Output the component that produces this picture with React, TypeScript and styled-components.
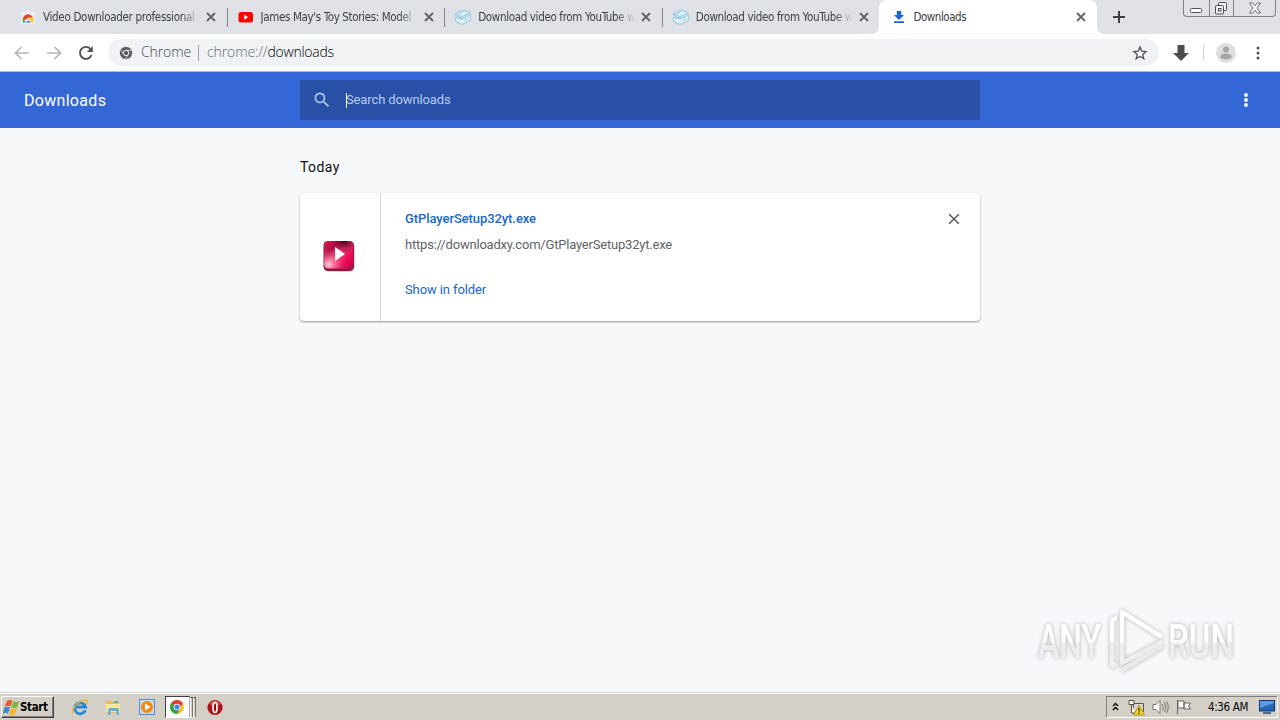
import React from "react";
import styled, { createGlobalStyle } from "styled-components";

const Global = createGlobalStyle`
  * { box-sizing: border-box; }
  body { margin: 0; overflow: hidden; background: #f6f9fc; }
  svg { display: block; flex: none; }
`;

const Screen = styled.div`
  position: relative;
  display: flex;
  flex-direction: column;
  width: 1280px;
  height: 720px;
  overflow: hidden;
  font-family: Roboto, "Liberation Sans", sans-serif;
`;

const TabStrip = styled.div`
  display: flex;
  height: 34px;
  padding-left: 9px;
  background: #dee1e6;
`;

const Tab = styled.div<{ $active?: boolean; $divider?: boolean }>`
  position: relative;
  display: flex;
  align-items: center;
  width: 217.6px;
  height: 34px;
  padding-left: 11px;
  background: ${(p) => (p.$active ? "#fff" : "transparent")};
  border-radius: ${(p) => (p.$active ? "8px 8px 0 0" : "0")};
  &::after {
    content: "";
    display: ${(p) => (p.$divider ? "block" : "none")};
    position: absolute;
    right: -1px;
    top: 8px;
    width: 1px;
    height: 19px;
    background: #80848a;
  }
`;

const TabTitle = styled.div<{ $spacing?: number; $fade?: boolean }>`
  width: 158px;
  margin-left: 7px;
  white-space: nowrap;
  font: 11.5px/18px "DejaVu Sans Condensed", "DejaVu Sans", sans-serif;
  letter-spacing: ${(p) => p.$spacing ?? 0}px;
  color: #3c4043;
  mask-image: ${(p) => (p.$fade ? "linear-gradient(90deg, #000 138px, transparent 157px)" : "none")};
`;

const TabClose = styled.div`
  margin-left: 5px;
`;

const TabFoot = styled.svg<{ $side: "left" | "right" }>`
  position: absolute;
  bottom: 0;
  ${(p) => p.$side}: -8px;
`;

const NewTab = styled.div`
  display: flex;
  align-items: center;
  padding-left: 16px;
`;

const WindowButtons = styled.div`
  display: flex;
  width: 93px;
  height: 17px;
  margin-left: auto;
  margin-right: 4px;
  border: 1px solid #7f8387;
  border-top: 0;
  border-radius: 0 0 4px 4px;
`;

const WindowButton = styled.div<{ $w: number }>`
  display: flex;
  align-items: center;
  justify-content: center;
  width: ${(p) => p.$w}px;
  & + & { border-left: 1px solid #7f8387; }
`;

const Toolbar = styled.div`
  display: flex;
  align-items: center;
  height: 38px;
  padding-left: 13px;
  background: #fff;
  border-bottom: 1px solid #a4bfd9;
`;

const NavIcons = styled.div`
  display: flex;
  gap: 14px;
  width: 95px;
`;

const AddressBar = styled.div`
  display: flex;
  align-items: center;
  width: 1051px;
  height: 27px;
  padding: 0 10px 0 11px;
  border-radius: 14px;
  background: #f0f3f6;
`;

const AddressText = styled.span<{ $color: string; $spacing: number }>`
  padding-bottom: 2px;
  font: 300 14px/20px "Open Sans", "Noto Sans", sans-serif;
  letter-spacing: ${(p) => p.$spacing}px;
  color: ${(p) => p.$color};
`;

const Rule = styled.div<{ $h: number; $m: string; $color: string }>`
  width: 1px;
  height: ${(p) => p.$h}px;
  margin: ${(p) => p.$m};
  background: ${(p) => p.$color};
`;

const StarSlot = styled.div`
  margin-left: auto;
`;

const ToolbarActions = styled.div`
  display: flex;
  align-items: center;
  margin-left: 13px;
`;

const PageHeader = styled.header`
  display: flex;
  align-items: center;
  height: 56px;
  padding: 0 24px;
  background: #3367d6;
`;

const PageTitle = styled.h1`
  width: 276px;
  margin: 0;
  font-size: 16px;
  font-weight: 400;
  letter-spacing: 0.3px;
  line-height: 22px;
  padding-top: 2px;
  color: #fff;
`;

const SearchBox = styled.div`
  display: flex;
  align-items: center;
  width: 680px;
  height: 40px;
  padding-left: 12px;
  background: #2850a7;
`;

const Caret = styled.div`
  width: 1px;
  height: 15px;
  margin-left: 14px;
  background: #fff;
`;

const Placeholder = styled.span`
  margin-left: -1px;
  font-size: 13px;
  line-height: 18px;
  letter-spacing: -0.12px;
  color: #b9cbee;
`;

const MenuSlot = styled.div`
  width: 20px;
  margin-left: auto;
`;

const Content = styled.main`
  flex: 1;
  padding: 28px 0 0 300px;
  background: #f6f9fc;
`;

const DayHeading = styled.h2`
  margin: 0 0 15px;
  font-size: 14px;
  font-weight: 400;
  line-height: 22px;
  letter-spacing: 0.4px;
  color: #111;
`;

const Card = styled.section`
  display: flex;
  width: 680px;
  height: 128px;
  border-radius: 4px;
  background: #fff;
  box-shadow: 0 1px 2px rgba(60, 64, 67, 0.4), 0 1px 2px rgba(60, 64, 67, 0.16);
`;

const FileIconPane = styled.div`
  display: flex;
  align-items: center;
  justify-content: center;
  width: 81px;
  padding: 0 2px 2px 0;
  border-right: 1px solid #d6d9dc;
`;

const FileDetails = styled.div`
  display: flex;
  flex-direction: column;
  flex: 1;
  padding: 16px 0 0 24px;
`;

const FileName = styled.div`
  font-size: 13px;
  font-weight: 500;
  line-height: 20px;
  letter-spacing: -0.08px;
  color: #1967c8;
`;

const FileUrl = styled.div`
  margin-top: 6px;
  font-size: 13px;
  line-height: 20px;
  letter-spacing: -0.2px;
  color: #5f6368;
`;

const ShowLink = styled.div`
  margin-top: 25px;
  font-size: 13px;
  line-height: 20px;
  letter-spacing: -0.1px;
  color: #1967c8;
`;

const RemoveSlot = styled.div`
  padding: 20px 20px 0 0;
`;

const Watermark = styled.svg`
  position: absolute;
  left: 1029px;
  top: 604px;
  filter: drop-shadow(0 0 2px rgba(70, 75, 80, 0.4));
`;

const Taskbar = styled.footer`
  display: flex;
  align-items: center;
  height: 28px;
  padding: 2px 2px 0 1px;
  background: #d4d0c8;
  box-shadow: inset 0 1px #d4d0c8, inset 0 2px #fff;
`;

const StartButton = styled.div`
  display: flex;
  align-items: center;
  width: 53px;
  height: 22px;
  padding-left: 1px;
  border: 1px solid;
  border-color: #fff #404040 #404040 #fff;
  box-shadow: inset -1px -1px #808080;
  font: bold 11.5px/18px "DejaVu Sans Condensed", "DejaVu Sans", sans-serif;
  letter-spacing: -0.35px;
  color: #000;
`;

const QuickLaunch = styled.div`
  display: flex;
  align-items: center;
  gap: 16px;
  margin-left: 17px;
`;

const RunningApp = styled.div`
  display: flex;
  align-items: center;
  width: 25px;
  height: 22px;
  margin-left: 10px;
  padding-left: 3px;
  background: #fff;
  border: 1px solid;
  border-color: #404040 #b0aca4 #fff #404040;
`;

const StackEdge = styled.div`
  width: 3px;
  height: 21px;
  border: 1px solid;
  border-color: #404040 #77736c #fff #f4f2ee;
`;

const OperaSlot = styled.div`
  margin-left: 11px;
`;

const Tray = styled.div`
  display: flex;
  align-items: center;
  width: 172px;
  height: 22px;
  margin-left: auto;
  padding-left: 5px;
  border: 1px solid;
  border-color: #808080 #fff #fff #808080;
`;

const Clock = styled.span`
  margin-left: 16px;
  width: 51px;
  white-space: nowrap;
  font: 11.5px/16px "DejaVu Sans Condensed", "DejaVu Sans", sans-serif;
  letter-spacing: -0.35px;
  color: #000;
`;

const Cross = ({ size = 10, color = "#5f6368", weight = 1.8 }) => (
  <svg width={size} height={size} viewBox="0 0 10 10" stroke={color} strokeWidth={weight}>
    <path d="M1 1l8 8M9 1l-8 8" />
  </svg>
);

const WebStoreIcon = () => (
  <svg width="16" height="16" viewBox="0 0 16 16">
    <path d="M1 3h14v11q0 1-1 1H2q-1 0-1-1z" fill="#eceef0" />
    <path d="M5 3q3-3 6 0" fill="none" stroke="#f7f8f9" />
    <path d="M3 12a5.2 5.2 0 0 1 10-3H8z" fill="#e2442f" />
    <path d="M3 9l3 5H3.5q-1.500-2-.5-5z" fill="#4aa65a" />
    <path d="M8 8.500h5.200q.8 2 0 5.500H10z" fill="#f6c844" />
    <path d="M5 14a3.200 3.200 0 0 1 6.300 0z" fill="#4a7fe0" stroke="#fff" strokeWidth=".7" />
  </svg>
);

const YouTubeIcon = () => (
  <svg width="16" height="16" viewBox="0 0 16 16">
    <rect x=".5" y="3" width="14.500" height="10.500" rx="2.500" fill="#f00" />
    <path d="M6.200 5.800v5l4-2.500z" fill="#fff" />
  </svg>
);

const BoxIcon = () => (
  <svg width="16" height="17" viewBox="0 0 16 17" fill="#e2f0f7" stroke="#83c6e2" strokeWidth=".9">
    <path d="M.6 8.500v4l6.500 3 8.300-4V5.800L7 10z" />
    <path d="M.6 4.500L7.500 1.200l7.900 2.600L7 7.600z" />
    <path d="M.6 4.500v2L7 9.600V7.600M4 4.500l4-1.800M9.500 11.500l3.500-1.700" fill="none" />
  </svg>
);

const DownloadIcon = () => (
  <svg width="16" height="16" viewBox="-1 0 16 16" fill="#1b66d1">
    <path d="M5.800 2h4.400v4H13L8 11 3 6h2.800zM3 12.300h10V14H3z" />
  </svg>
);

const Arrow = ({ flip = false }) => (
  <svg width="18" height="18" viewBox="0 0 18 18" fill="none" stroke="#b4b6b8" strokeWidth="1.700">
    <path d={flip ? "M2 9h13.500M9.500 3l6 6-6 6" : "M16 9H2.500M8.500 3l-6 6 6 6"} />
  </svg>
);

const ReloadIcon = () => (
  <svg width="18" height="18" viewBox="0 0 18 18">
    <path d="M14.600 11A6 6 0 1 1 13.400 4.800" fill="none" stroke="#4f5357" strokeWidth="1.900" />
    <path d="M15.800 2v6h-6z" fill="#4f5357" />
  </svg>
);

const ChromeGlyph = () => (
  <svg width="14" height="14" viewBox="0 0 14 14">
    <circle cx="7" cy="7" r="6.200" fill="#5b5f63" />
    <circle cx="7" cy="7" r="2.700" fill="#5b5f63" stroke="#e8ebee" strokeWidth="1" />
    <path d="M7 4.300h5.500M4.700 8.400L2 3.800M9.300 8.400L6.700 13" stroke="#e8ebee" strokeWidth=".8" />
  </svg>
);

const ChromeLogo = () => (
  <svg width="16" height="16" viewBox="0 0 16 16">
    <circle cx="8" cy="8" r="7" fill="#f4c430" />
    <path d="M8 8L1.940 4.500A7 7 0 0 1 14.060 4.500z" fill="#df3f31" />
    <path d="M8 8L1.940 4.500A7 7 0 0 0 8 15l3-5.300z" fill="#2f9f51" />
    <path d="M8 4.500h6.060L11 8z" fill="#df3f31" />
    <circle cx="8" cy="8" r="3.300" fill="#fff" />
    <circle cx="8" cy="8" r="2.500" fill="#3f7fe6" />
  </svg>
);

const PlayerIcon = () => (
  <svg width="32" height="34" viewBox="0 0 32 34">
    <defs>
      <linearGradient id="body" x1="0" y1="0.100" x2="1" y2=".9">
        <stop offset="0" stopColor="#d01c50" />
        <stop offset=".25" stopColor="#b00c43" />
        <stop offset=".48" stopColor="#f03a72" />
        <stop offset=".75" stopColor="#ea0b58" />
        <stop offset="1" stopColor="#c40648" />
      </linearGradient>
      <radialGradient id="shine" cx=".15" cy=".85" r=".6">
        <stop offset="0" stopColor="#ffe2e8" stopOpacity=".85" />
        <stop offset="1" stopColor="#ff3c78" stopOpacity="0" />
      </radialGradient>
      <radialGradient id="dark" cx=".7" cy="0" r=".45">
        <stop offset="0" stopColor="#3d0016" />
        <stop offset="1" stopColor="#8a0030" stopOpacity="0" />
      </radialGradient>
    </defs>
    <rect x=".8" y="3" width="31" height="30" rx="5" fill="#d6d1d3" />
    <rect x=".5" y="2" width="30.500" height="30" rx="4.500" fill="#8a1a44" />
    <rect x="1" y="2" width="29.500" height="27.500" rx="4.500" fill="url(#body)" />
    <rect x="1" y="2" width="29.500" height="27.500" rx="4.500" fill="url(#shine)" />
    <rect x="1" y="2" width="29.500" height="27.500" rx="4.500" fill="url(#dark)" />
    <path d="M12 8v14L22 15z" fill="#fff" />
  </svg>
);

const Dots = ({ color, r = 1.7, gap = 5.5 }: { color: string; r?: number; gap?: number }) => (
  <svg width="4" height="18" viewBox="0 0 4 18" fill={color}>
    <circle cx="2" cy={9 - gap} r={r} />
    <circle cx="2" cy="9" r={r} />
    <circle cx="2" cy={9 + gap} r={r} />
  </svg>
);

const tabs = [
  { title: "Video Downloader professional -", icon: <WebStoreIcon />, spacing: -0.3, divider: true },
  { title: "James May's Toy Stories: Model", icon: <YouTubeIcon />, spacing: -0.36, divider: true },
  { title: "Download video from YouTube w", icon: <BoxIcon />, spacing: -0.34, divider: true },
  { title: "Download video from YouTube w", icon: <BoxIcon />, spacing: -0.34, divider: false },
];

export default function App() {
  return (
    <Screen>
      <Global />
      <TabStrip>
        {tabs.map((t, i) => (
          <Tab key={i} $divider={t.divider}>
            {t.icon}
            <TabTitle $fade $spacing={t.spacing}>{t.title}</TabTitle>
            <TabClose><Cross /></TabClose>
          </Tab>
        ))}
        <Tab $active>
          <TabFoot $side="left" width="8" height="8"><path d="M8 0v8H0q8 0 8-8z" fill="#fff" /></TabFoot>
          <DownloadIcon />
          <TabTitle $spacing={-0.45}>Downloads</TabTitle>
          <TabClose><Cross /></TabClose>
          <TabFoot $side="right" width="8" height="8"><path d="M0 0v8h8q-8 0-8-8z" fill="#fff" /></TabFoot>
        </Tab>
        <NewTab>
          <svg width="12" height="12" viewBox="0 0 12 12" stroke="#3c4043" strokeWidth="2"><path d="M0 6h12M6 0v12" /></svg>
        </NewTab>
        <WindowButtons>
          <WindowButton $w={25}>
            <svg width="12" height="16" viewBox="0 0 12 16"><rect x=".5" y="8.500" width="11" height="4" rx="1" fill="#fff" stroke="#4c4f52" /></svg>
          </WindowButton>
          <WindowButton $w={25}>
            <svg width="14" height="14" viewBox="1 -1 14 14" fill="#f1f3f5" stroke="#4c4f52">
              <rect x="4.500" y=".5" width="8" height="8" rx="1" />
              <rect x="1.500" y="3.500" width="8" height="8.500" rx="1" />
              <rect x="4.500" y="6.500" width="2.500" height="2.500" />
            </svg>
          </WindowButton>
          <WindowButton $w={42}>
            <svg width="12" height="12" viewBox="0 0 12 12" fill="#fff" stroke="#5a5d60" strokeWidth=".9">
              <path d="M.5 1h3.200L6 3.800 8.300 1h3.200L7.900 6l3.600 5H8.300L6 8.200 3.700 11H.5L4.100 6z" />
            </svg>
          </WindowButton>
        </WindowButtons>
      </TabStrip>

      <Toolbar>
        <NavIcons>
          <Arrow />
          <Arrow flip />
          <ReloadIcon />
        </NavIcons>
        <AddressBar>
          <ChromeGlyph />
          <Rule $h={0} $m="0 7px 0 0" $color="transparent" />
          <AddressText $color="#45494d" $spacing={-0.1}>Chrome</AddressText>
          <Rule $h={16} $m="0 8px 0 7px" $color="#9a9da1" />
          <AddressText $color="#65696d" $spacing={-0.12}>chrome://</AddressText>
          <AddressText $color="#000" $spacing={-0.25}>downloads</AddressText>
          <StarSlot>
            <svg width="18" height="18" viewBox="0 0 18 18" fill="none" stroke="#4f5357" strokeWidth="1.300">
              <path d="M9 3l1.750 4.100 4.350.4-3.300 2.900 1 4.200L9 12.400l-3.800 2.200 1-4.200L2.900 7.500l4.350-.4z" />
            </svg>
          </StarSlot>
        </AddressBar>
        <ToolbarActions>
          <svg width="18" height="18" viewBox="0 0 18 18" fill="#4c4c4c"><path d="M5.500 1h7v8H17l-8 8-8-8h4.500z" /></svg>
          <Rule $h={16} $m="0 12px 0 13px" $color="#cfd1d4" />
          <svg width="20" height="20" viewBox="0 0 20 20">
            <circle cx="10" cy="10" r="10" fill="#dcdee0" />
            <circle cx="10" cy="6.500" r="3" fill="#a3a5a7" />
            <ellipse cx="10" cy="13.500" rx="5.800" ry="3" fill="#a3a5a7" />
          </svg>
          <Rule $h={0} $m="0 10px 0 9px" $color="transparent" />
          <Dots color="#4f5357" r={1.5} gap={5} />
        </ToolbarActions>
      </Toolbar>

      <PageHeader>
        <PageTitle>Downloads</PageTitle>
        <SearchBox>
          <svg width="20" height="20" viewBox="0 0 24 24" fill="#b4c8ef">
            <path d="M15.500 14h-.79l-.28-.27A6.470 6.470 0 0 0 16 9.500 6.500 6.500 0 1 0 9.500 16c1.610 0 3.090-.59 4.230-1.570l.27.28v.79l5 4.990L20.490 19l-4.990-5zm-6 0C7.010 14 5 11.990 5 9.500S7.010 5 9.500 5 14 7.010 14 9.500 11.990 14 9.500 14z" />
          </svg>
          <Caret />
          <Placeholder>Search downloads</Placeholder>
        </SearchBox>
        <MenuSlot><svg width="20" height="18" viewBox="0 0 20 18" fill="#fff"><circle cx="10" cy="4" r="1.900" /><circle cx="10" cy="9" r="1.900" /><circle cx="10" cy="14" r="1.900" /></svg></MenuSlot>
      </PageHeader>

      <Content>
        <DayHeading>Today</DayHeading>
        <Card>
          <FileIconPane><PlayerIcon /></FileIconPane>
          <FileDetails>
            <FileName>GtPlayerSetup32yt.exe</FileName>
            <FileUrl>https://downloadxy.com/GtPlayerSetup32yt.exe</FileUrl>
            <ShowLink>Show in folder</ShowLink>
          </FileDetails>
          <RemoveSlot><Cross size={12} weight={1.1} color="#4b4e52" /></RemoveSlot>
        </Card>
      </Content>

      <Watermark width="212" height="76" viewBox="0 0 212 76" fill="none">
        <defs>
          <linearGradient id="fade" gradientUnits="userSpaceOnUse" x1="0" y1="15" x2="0" y2="58">
            <stop offset=".5" stopColor="#fff" />
            <stop offset=".58" stopColor="#ececed" />
            <stop offset="1" stopColor="#eeeff0" />
          </linearGradient>
        </defs>
        <g fill="url(#fade)" fontFamily="Roboto, sans-serif" fontSize="49" fontWeight="500">
          <text x="9" y="54" textLength="63" lengthAdjust="spacingAndGlyphs">ANY</text>
          <text x="139" y="54" textLength="66" lengthAdjust="spacingAndGlyphs">RUN</text>
        </g>
        <g strokeWidth="4.500" strokeLinejoin="round">
          <path d="M88 14l-5 2v46l5-3" stroke="url(#fade)" />
          <path d="M133 33L93 8v51l40-21" stroke="url(#fade)" />
          <path d="M93 66l41-25" stroke="#e8e9ea" strokeWidth="5" />
        </g>
      </Watermark>

      <Taskbar>
        <StartButton>
          <svg width="17" height="17" viewBox="0 0 17 17">
            <path d="M4 2q3-2 5.500-.3L7.500 7.500Q5 6 1.800 7.500z" fill="#e85b2b" />
            <path d="M10.300 2.200q3 1.500 6.200-.3L14.300 8q-3 1.700-6 .2z" fill="#7ab840" />
            <path d="M1.500 8.500q3-1.500 5.600.1L5 14.500Q2.500 13-.2 14.500z" fill="#3f86d8" />
            <path d="M7.900 9.200q3 1.500 6.100-.1L12 15.200q-3 1.700-6 .1z" fill="#f3b928" />
          </svg>
          Start
        </StartButton>
        <QuickLaunch>
          <svg width="18" height="18" viewBox="0 0 18 18" fill="none">
            <path d="M14.300 12.200A5.500 5.500 0 1 1 14.500 9H5" stroke="#2587d8" strokeWidth="2.800" />
            <path d="M2 15.500C-1 12 8 2 15.500 2.200q2 .8-.5 3.800" stroke="#e7b52c" strokeWidth="1.300" />
          </svg>
          <svg width="18" height="18" viewBox="1 0 18 18">
            <path d="M2 3h5l1 1h7v11H2z" fill="#e5bd55" />
            <path d="M2 6h14v8H2z" fill="#fbe79b" />
            <path d="M4 17v-5q0-2 2-2h7q2 0 2 2v5h-2.500v-4h-6v4z" fill="#65aede" />
            <path d="M10 3h4v2h-4z" fill="#5bb6a8" />
          </svg>
          <svg width="16" height="16" viewBox="0 0 16 16">
            <rect x=".5" y=".5" width="15" height="15" fill="#c5dcf0" stroke="#568fc7" />
            <circle cx="8" cy="8" r="6" fill="#f18a13" />
            <path d="M6 4.500v7L11.500 8z" fill="#fff" />
          </svg>
        </QuickLaunch>
        <RunningApp><ChromeLogo /></RunningApp>
        <StackEdge />
        <StackEdge />
        <OperaSlot>
          <svg width="16" height="17" viewBox="0 0 16 17">
            <circle cx="8" cy="8.500" r="7.600" fill="#ae1416" />
            <path d="M2 5a7 7 0 0 1 12 0q-6 3-12 0z" fill="#d54b48" />
            <ellipse cx="8" cy="8.500" rx="2" ry="5" fill="#8b0c10" stroke="#fff" strokeWidth="1.700" />
          </svg>
        </OperaSlot>
        <Tray>
          <svg width="7" height="10" viewBox="0 0 8 10" fill="none" stroke="#000" strokeWidth="1.500"><path d="M1 4l3-3 3 3M1 8.500l3-3 3 3" /></svg>
          <Rule $h={0} $m="0 4px" $color="transparent" />
          <svg width="17" height="17" viewBox="0 0 17 17">
            <path d="M5.500 4.500h10v8h-10z" fill="#d9d8d3" stroke="#55534e" />
            <path d="M1 1.500h5v4H1zM3.500 5.500V14H8" fill="#f5f4ef" stroke="#55534e" />
            <path d="M11 6l5.500 10h-11z" fill="#f6d31f" stroke="#a68300" strokeWidth=".7" />
            <path d="M11 9v3.500M11 13.500v1.500" stroke="#222" strokeWidth="1.200" />
          </svg>
          <Rule $h={0} $m="0 3px" $color="transparent" />
          <svg width="17" height="16" viewBox="0 0 17 16" fill="none" stroke="#77746d">
            <path d="M1 5.500h3l4-4v13l-4-4H1z" fill="#fff" />
            <path d="M10.500 5q1.500 3 0 6M12.500 3q3 5 0 10M14.500 2q3.500 6 0 12" />
          </svg>
          <Rule $h={0} $m="0 3px" $color="transparent" />
          <svg width="16" height="16" viewBox="0 0 16 16" fill="#fff" stroke="#68655f">
            <path d="M1.500 1v14.500M2 2h6v7H2zM8 4h6.500l-2 3 2 3H8z" />
          </svg>
          <Clock>4:36 AM</Clock>
          <svg width="16" height="14" viewBox="0 0 16 14">
            <rect x=".5" y=".5" width="15" height="10.500" fill="#2565b5" stroke="#0d3876" />
            <path d="M1 1h14v2L1 8z" fill="#5d9be0" />
            <path d="M4 13h8" stroke="#27476e" strokeWidth="1.500" />
          </svg>
        </Tray>
      </Taskbar>
    </Screen>
  );
}
